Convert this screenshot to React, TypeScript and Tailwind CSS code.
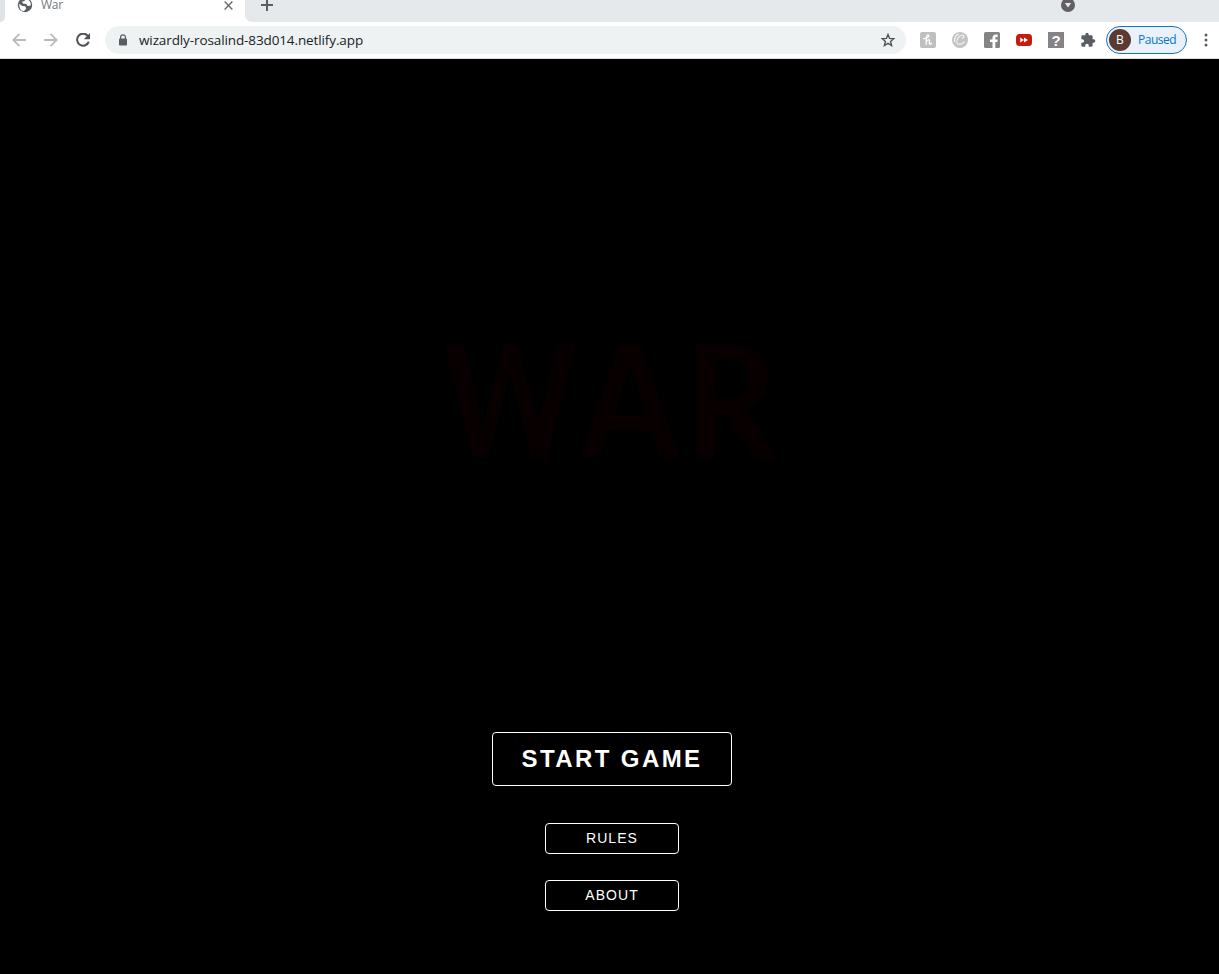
import React from 'react';

const UI = "font-['Open_Sans','Noto_Sans',sans-serif]";

function TabStrip() {
  return (
    <div className="flex h-[22px] shrink-0 overflow-hidden bg-[#e6e9ec]">
      <div className="w-[5px] shrink-0 bg-white">
        <div className="h-full rounded-br-[7px] bg-[#dfe2e6]" />
      </div>
      <div className="flex h-full w-[240px] shrink-0 items-start bg-white pl-[12px]">
        <svg className="-mt-[3px] shrink-0" width="16" height="16" viewBox="0 0 16 16">
          <circle cx="8" cy="8" r="7.2" fill="#5a5d61" />
          <path d="M2.3 6.8 5.2 9l3 .2 1 2.3-2.2 2.8C4 13.8 2 11.500 2.300 6.800ZM9 1.900 7.200 4.300l-2 .3.6 2 3.500.3 1.200 2 3.200-.4c.6-3-1.500-6-4.700-6.600Z" fill="#fff" />
        </svg>
        <span className={`${UI} mt-[-3px] ml-[8px] w-[174px] text-[12px] leading-[16px] tracking-[-0.300px] text-[#75797d]`}>War</span>
        <svg className="mt-[1px] ml-[9px] shrink-0" width="9" height="9" viewBox="0 0 9 9" stroke="#686c71" strokeWidth="1.400">
          <path d="m.6.6 7.800 7.800M8.400.6.6 8.400" />
        </svg>
      </div>
      <div className="flex-1 bg-white">
        <div className="flex h-full items-start rounded-bl-[7px] bg-[#e6e9ec]">
          <svg className="-mt-px ml-[16px]" width="12" height="12" viewBox="0 0 12 12" stroke="#5a5d61" strokeWidth="2">
            <path d="M6 0v12M0 6h12" />
          </svg>
          <svg className="mt-[-2px] ml-[788px]" width="14" height="14" viewBox="0 0 14 14">
            <circle cx="7" cy="7" r="7" fill="#625f66" />
            <path d="M3.800 5h6.400L7 9.400Z" fill="#e6e9ec" />
          </svg>
        </div>
      </div>
    </div>
  );
}

function Extensions() {
  return (
    <div className="ml-[14px] flex items-center gap-[16px]">
      <div className="flex h-4 w-4 items-center justify-center rounded-[2px] bg-[#bfbfbf]">
        <svg width="12" height="14" viewBox="0 0 12 14" fill="none" stroke="#fff" strokeWidth="1.300" strokeLinecap="round">
          <path d="M1.800 5.500C4.800 5.800 7.300 3.700 6.700 2.400 6 1.200 4.300 2.500 4.200 5.500v6M4.200 9C5.500 6.500 7.700 6 7.500 8l-.2 2.500c0 1.100 1.400.8 2.300-.4" />
        </svg>
      </div>
      <svg width="16" height="16" viewBox="0 0 16 16" fill="none">
        <circle cx="8" cy="8" r="8" fill="#c5c4c3" />
        <path d="M10 6.500c2.200-1 2.500-3.700.5-3.500C7 3.200 4 8 5 10.800c1 2.500 5 1.900 7.500-1.200M2.500 10C1.800 5.700 4.300 2.300 7 2" stroke="#f5f5f5" strokeWidth="1.200" />
      </svg>
      <svg width="16" height="16" viewBox="0 0 16 16">
        <rect width="16" height="16" rx="1.500" fill="#858386" />
        <path d="M8.500 16v-6H6V7.500h2.500V6c0-2.400 1.400-3.600 3.500-3.600h1.700V5h-1.300c-.8 0-1.100.4-1.100 1.100v1.400h2.400l-.3 2.500h-2.100v6Z" fill="#fff" />
      </svg>
      <svg width="16" height="16" viewBox="0 0 16 16">
        <rect y="2" width="16" height="12" rx="3.500" fill="#c81a0d" />
        <path d="M4.200 5.500 8 8l-3.800 2.500ZM8 5.500 12 8l-4 2.500Z" fill="#fff" />
      </svg>
      <div className="flex h-4 w-4 items-center justify-center bg-[#858386] font-['Liberation_Sans',sans-serif] text-[15px] leading-none font-bold text-white">?</div>
      <svg width="16" height="16" viewBox="0 0 24 24" fill="#5a5d61">
        <path d="M20.500 11H19V7c0-1.100-.9-2-2-2h-4V3.500a2.500 2.500 0 0 0-5 0V5H4c-1.100 0-2 .9-2 2v3.800h1.500a2.700 2.700 0 0 1 0 5.400H2V20c0 1.100.9 2 2 2h3.800v-1.500a2.700 2.700 0 0 1 5.400 0V22H17c1.100 0 2-.9 2-2v-4h1.500a2.500 2.500 0 0 0 0-5Z" />
      </svg>
    </div>
  );
}

function Toolbar() {
  return (
    <div className="flex h-[37px] shrink-0 items-center border-b border-[#d9dcde] bg-white pl-[12px]">
      <svg width="14" height="14" viewBox="0 0 14 14" fill="none" stroke="#b9babc" strokeWidth="1.800">
        <path d="M14 7H1.500M7.500.8 1.300 7l6.200 6.200" />
      </svg>
      <svg className="ml-[18px]" width="14" height="14" viewBox="0 0 14 14" fill="none" stroke="#b9babc" strokeWidth="1.800">
        <path d="M0 7h12.500M6.500.8 12.700 7l-6.200 6.200" />
      </svg>
      <svg className="ml-[18px]" width="14" height="14" viewBox="0 0 14 14">
        <path d="M11.700 2.800A6 6 0 1 0 12.800 8.600" fill="none" stroke="#505358" strokeWidth="2" />
        <path d="M14 0v6.200H7.800Z" fill="#505358" />
      </svg>
      <div className="ml-[15px] flex h-7 w-[801px] shrink-0 items-center rounded-full bg-[#eef2f3] pl-[14px]">
        <svg width="8" height="12" viewBox="0 0 8 12">
          <rect y="4.500" width="8" height="7" rx=".8" fill="#5a5d61" />
          <path d="M1.600 5V3.200a2.400 2.400 0 0 1 4.800 0V5" fill="none" stroke="#5a5d61" strokeWidth="1.200" />
        </svg>
        <span className={`${UI} ml-[12px] w-[742px] text-[13.500px] tracking-[-0.110px] text-[#202226]`}>wizardly-rosalind-83d014.netlify.app</span>
        <svg className="shrink-0" width="14" height="14" viewBox="0 0 14 14" fill="none" stroke="#505358" strokeWidth="1.400">
          <path d="m7 1.500 1.600 3.900 4.200.3-3.200 2.700 1 4.100L7 10.300l-3.600 2.200 1-4.100L1.200 5.700l4.200-.3Z" />
        </svg>
      </div>
      <Extensions />
      <div className="ml-[10px] flex h-7 w-[81px] shrink-0 items-center rounded-full border border-[#1474b8] bg-[#eaf1fa] pl-[2px]">
        <div className={`${UI} flex h-[22px] w-[22px] items-center justify-center rounded-full bg-[#5c3a34] text-[12px] text-white`}>B</div>
        <span className={`${UI} ml-[7px] text-[12px] tracking-[-0.500px] text-[#0078d4]`}>Paused</span>
      </div>
      <svg className="ml-[17px]" width="4" height="14" viewBox="0 0 4 14" fill="#5a5d61">
        <circle cx="2" cy="2" r="1.500" />
        <circle cx="2" cy="7" r="1.500" />
        <circle cx="2" cy="12" r="1.500" />
      </svg>
    </div>
  );
}

function Title() {
  return (
    <svg className="mt-[241px] ml-[430px] shrink-0" width="360" height="200" viewBox="0 0 360 200">
      <g fill="#080000" fontFamily="Lato, sans-serif" fontWeight="700" fontSize="157">
        <text transform="translate(14 158) scale(.8 1)">W</text>
        <text transform="translate(151 158) scale(.9 1)">A</text>
        <text transform="translate(254 158) scale(.92 1)">R</text>
      </g>
    </svg>
  );
}

export default function App() {
  return (
    <div className="flex h-[974px] w-[1219px] flex-col overflow-hidden bg-black">
      <TabStrip />
      <Toolbar />
      <main className="flex flex-1 flex-col font-['Liberation_Sans',sans-serif] text-white">
        <Title />
        <div className="mt-[232px] ml-[492px] flex w-[240px] flex-col items-center">
          <button className="h-[54px] w-full rounded-[4px] border border-white text-[24px] font-bold tracking-[2.400px]">START GAME</button>
          <button className="mt-[37px] h-[31px] w-[134px] rounded-[4px] border border-white text-[14px] tracking-[1.050px]">RULES</button>
          <button className="mt-[26px] h-[31px] w-[134px] rounded-[4px] border border-white text-[14px] tracking-[1.050px]">ABOUT</button>
        </div>
      </main>
    </div>
  );
}
